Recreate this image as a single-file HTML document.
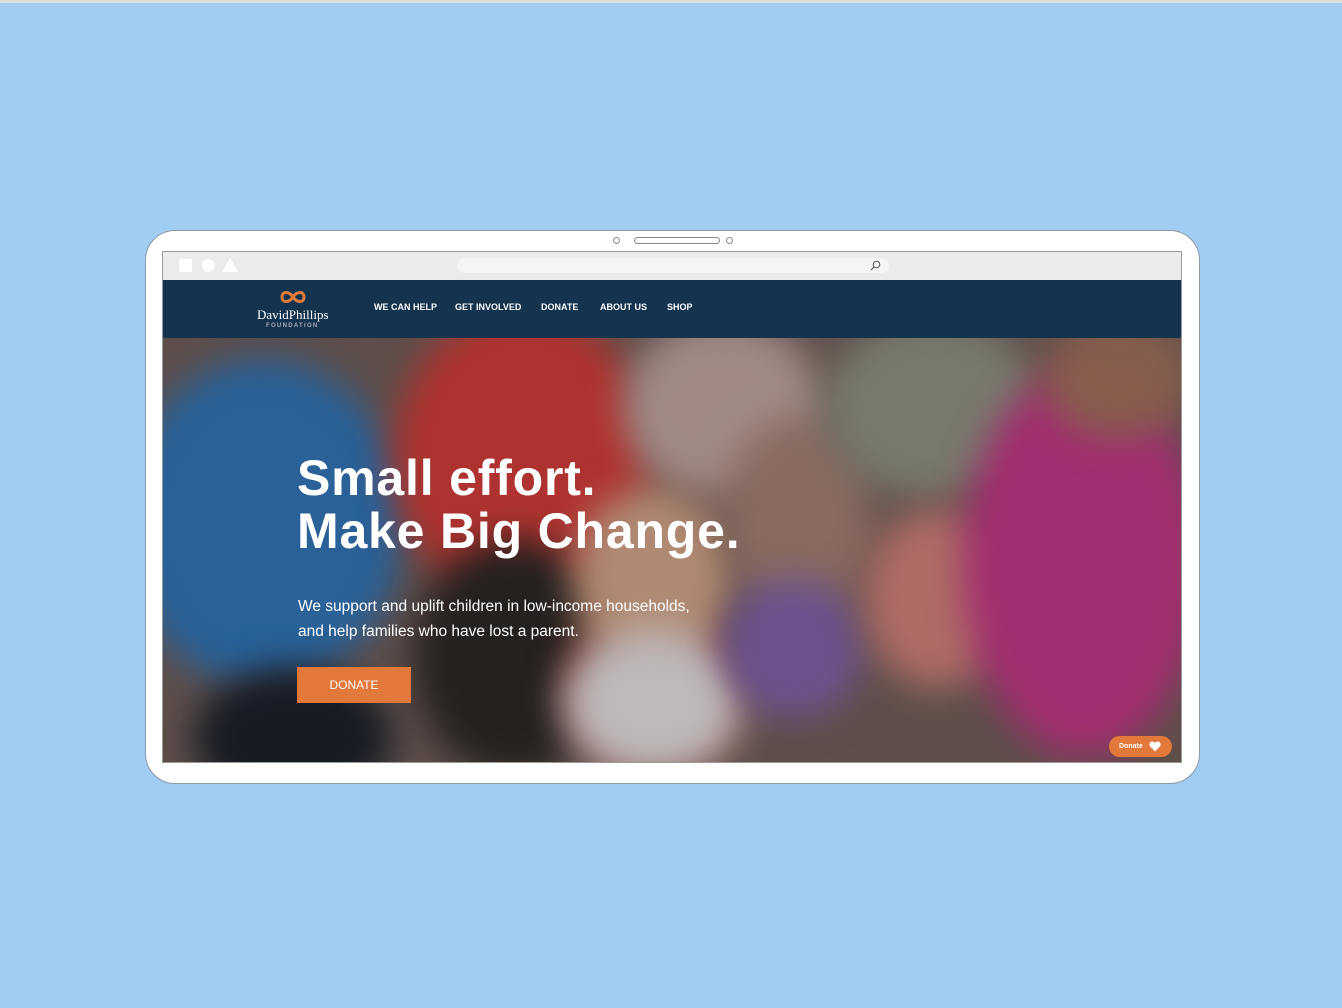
<!DOCTYPE html>
<html><head><style>
*{margin:0;padding:0;box-sizing:border-box}
body{width:1342px;height:1008px;background:#a2cdf3;position:relative;overflow:hidden;font-family:"Liberation Sans",sans-serif}
.dev{position:absolute;left:145px;top:230px;width:1055px;height:554px;background:#fff;border:1px solid #8a9aa8;border-radius:30px}
.scr{position:absolute;left:162px;top:251px;width:1020px;height:512px;border:1px solid #999;overflow:hidden;background:#eee}
.bar{position:absolute;left:0;top:0;width:100%;height:28px;background:#ebebeb}
.nav{position:absolute;left:0;top:28px;width:100%;height:58px;background:#13334f}
.hero{position:absolute;left:0;top:86px;width:100%;height:426px;overflow:hidden;background:#6c5a55}
.b{position:absolute;border-radius:50%;filter:blur(18px)}
.nav a{position:absolute;top:22px;color:#fff;font-size:9px;font-weight:bold;text-decoration:none}
</style></head><body>
<div style="position:absolute;left:0;top:0;width:1342px;height:3px;background:#ddd"></div>
<div class="dev">
 <div style="position:absolute;left:467px;top:6px;width:7px;height:7px;border:1px solid #888;border-radius:50%"></div>
 <div style="position:absolute;left:488px;top:6px;width:86px;height:7px;border:1px solid #888;border-radius:4px"></div>
 <div style="position:absolute;left:580px;top:6px;width:7px;height:7px;border:1px solid #888;border-radius:50%"></div>
</div>
<div class="scr">
 <div class="bar">
  <div style="position:absolute;left:16px;top:7px;width:13px;height:13px;background:#fff"></div>
  <div style="position:absolute;left:39px;top:7px;width:13px;height:13px;background:#fff;border-radius:50%"></div>
  <div style="position:absolute;left:59px;top:6px;width:0;height:0;border-left:8px solid transparent;border-right:8px solid transparent;border-bottom:14px solid #fff"></div>
  <div style="position:absolute;left:294px;top:6px;width:432px;height:15px;background:#f5f5f5;border-radius:8px"></div>
  <svg style="position:absolute;left:707px;top:8px" width="11" height="11"><circle cx="6.5" cy="4.5" r="3.3" fill="none" stroke="#555" stroke-width="1"/><line x1="4" y1="7" x2="1" y2="10" stroke="#555" stroke-width="1.2"/></svg>
 </div>
 <div class="nav">
  <svg style="position:absolute;left:116px;top:9px" width="28" height="16"><path d="M14 8 C10 2,3 2,3 8 C3 14,10 14,14 8 C18 2,25 2,25 8 C25 14,18 14,14 8Z" fill="none" stroke="#e07b39" stroke-width="3"/></svg>
  <div style="position:absolute;left:94px;top:27px;color:#fff;font-family:'Liberation Serif',serif;font-size:13px">DavidPhillips</div>
  <div style="position:absolute;left:103px;top:43px;color:#aab;font-size:6px;letter-spacing:1.3px;font-weight:bold">FOUNDATION</div>
  <a style="left:211px">WE CAN HELP</a><a style="left:292px">GET INVOLVED</a><a style="left:378px">DONATE</a><a style="left:437px">ABOUT US</a><a style="left:504px">SHOP</a>
 </div>
 <div class="hero">
  <div class="b" style="left:-40px;top:20px;width:280px;height:330px;background:#2f6fae"></div>
  <div class="b" style="left:30px;top:330px;width:200px;height:140px;background:#1a1f2a"></div>
  <div class="b" style="left:230px;top:-30px;width:260px;height:300px;background:#c73a36"></div>
  <div class="b" style="left:250px;top:200px;width:200px;height:240px;background:#2b2624"></div>
  <div class="b" style="left:460px;top:-20px;width:200px;height:180px;background:#b79d98"></div>
  <div class="b" style="left:400px;top:260px;width:180px;height:180px;background:#8a3b36"></div>
  <div class="b" style="left:410px;top:150px;width:160px;height:180px;background:#c99d82"></div>
  <div class="b" style="left:400px;top:290px;width:180px;height:150px;background:#d9d2d2"></div>
  <div class="b" style="left:560px;top:80px;width:150px;height:200px;background:#9c7a6e"></div>
  <div class="b" style="left:560px;top:240px;width:140px;height:140px;background:#7b5ea2"></div>
  <div class="b" style="left:660px;top:-20px;width:220px;height:180px;background:#8a8a7c"></div>
  <div class="b" style="left:700px;top:170px;width:150px;height:180px;background:#c77b74"></div>
  <div class="b" style="left:800px;top:30px;width:240px;height:390px;background:#b8357f"></div>
  <div class="b" style="left:880px;top:-20px;width:150px;height:120px;background:#9a6b58"></div>
  <div style="position:absolute;inset:0;background:rgba(0,0,0,.12)"></div>
  <div style="position:absolute;left:134px;top:114px;color:#fff;font-size:50px;font-weight:bold;line-height:53px;letter-spacing:0.8px;white-space:nowrap">Small effort.<br>Make Big Change.</div>
  <div style="position:absolute;left:135px;top:256px;color:#fff;font-size:15.5px;line-height:25px;white-space:nowrap">We support and uplift children in low-income households,<br>and help families who have lost a parent.</div>
  <div style="position:absolute;left:134px;top:329px;width:114px;height:36px;background:#e27839;color:#fff;font-size:12px;text-align:center;line-height:36px">DONATE</div>
  <div style="position:absolute;left:946px;top:398px;width:63px;height:21px;background:#e27839;border-radius:11px;color:#fff;font-size:7px;font-weight:bold;line-height:21px;padding-left:10px">Donate
   <svg style="position:absolute;left:40px;top:5px" width="12" height="11"><path d="M6 10.5 L1.2 5.5 C-0.5 3.5,0.8 0.5,3.3 0.5 C4.6 0.5,5.5 1.3,6 2.2 C6.5 1.3,7.4 0.5,8.7 0.5 C11.2 0.5,12.5 3.5,10.8 5.5Z" fill="#fff"/></svg></div>
 </div>
</div>
</body></html>
